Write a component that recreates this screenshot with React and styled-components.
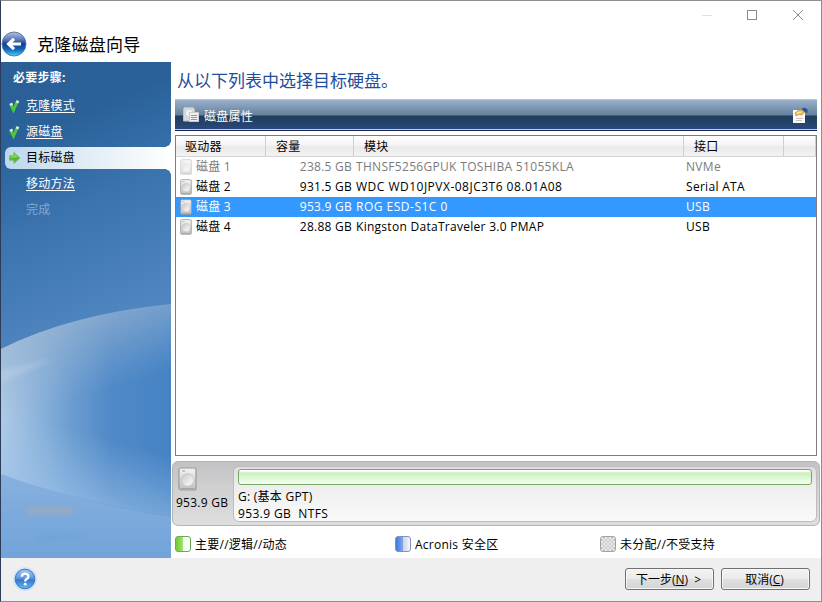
import styled, { createGlobalStyle, css } from "styled-components";

const disks = [
    { name: "磁盘 1", size: "238.5 GB", model: "THNSF5256GPUK TOSHIBA 51055KLA", bus: "NVMe", state: "off", tracking: 0.31 },
    { name: "磁盘 2", size: "931.5 GB", model: "WDC WD10JPVX-08JC3T6 08.01A08", bus: "Serial ATA", tracking: 0.49 },
    { name: "磁盘 3", size: "953.9 GB", model: "ROG ESD-S1C 0", bus: "USB", state: "on", tracking: 0.5 },
    { name: "磁盘 4", size: "28.88 GB", model: "Kingston DataTraveler 3.0 PMAP", bus: "USB", tracking: 0.28 },
];

export default function App(){
    return(
        <>
        <Global />
        <Window>
            <TitleBar>
                <BackIcon />
                <Title>克隆磁盘向导</Title>
                <WindowButtons />
            </TitleBar>
            <Body>
                <Sidebar>
                    <SidebarArt />
                    <StepsTitle>必要步骤:</StepsTitle>
                    <Step><CheckIcon /><StepLink>克隆模式</StepLink></Step>
                    <Step><CheckIcon /><StepLink>源磁盘</StepLink></Step>
                    <Step $active><ArrowIcon /><span>目标磁盘</span></Step>
                    <Step><StepLink>移动方法</StepLink></Step>
                    <Step $muted>完成</Step>
                </Sidebar>
                <Main>
                    <Heading>从以下列表中选择目标硬盘。</Heading>
                    <Toolbar>
                        <PropsIcon />
                        <ToolbarText>磁盘属性</ToolbarText>
                        <NoteIcon />
                    </Toolbar>
                    <Table>
                        <HeadRow>
                            <HeadCell>驱动器</HeadCell>
                            <HeadCell>容量</HeadCell>
                            <HeadCell>模块</HeadCell>
                            <HeadCell>接口</HeadCell>
                            <HeadCell />
                        </HeadRow>
                        {disks.map((d) => (
                            <Row key={d.name} $state={d.state}>
                                <NameCell><DriveIcon w={12} h={16} faded={d.state === "off"} />{d.name}</NameCell>
                                <SizeCell>{d.size}</SizeCell>
                                <Cell $tracking={d.tracking}>{d.model}</Cell>
                                <Cell>{d.bus}</Cell>
                            </Row>
                        ))}
                    </Table>
                    <DiskPanel>
                        <DiskInfo>
                            <DriveIcon w={19} h={24} />
                            <span>953.9 GB</span>
                        </DiskInfo>
                        <Volume>
                            <VolumeBar />
                            <VolumeText>G: (基本 GPT)</VolumeText>
                            <VolumeText $tracking={0.38}>953.9 GB&nbsp; NTFS</VolumeText>
                        </Volume>
                    </DiskPanel>
                    <Legend>
                        <LegendItem $width={220}><Swatch $kind="green" /><span>主要//逻辑//动态</span></LegendItem>
                        <LegendItem $width={205}><Swatch $kind="blue" /><span>Acronis 安全区</span></LegendItem>
                        <LegendItem><Swatch $kind="gray" /><span>未分配//不受支持</span></LegendItem>
                    </Legend>
                </Main>
            </Body>
            <Footer>
                <HelpIcon />
                <Buttons>
                    <Button>下一步(<u>N</u>)&nbsp; &gt;</Button>
                    <Button>取消(<u>C</u>)</Button>
                </Buttons>
            </Footer>
        </Window>
        </>
    );
}

function BackIcon(){
    return(
        <svg width="26" height="26" viewBox="0 0 26 26">
            <defs>
                <linearGradient id="back" x1="0" y1="0" x2="0" y2="1">
                    <stop offset="0" stopColor="#b4c0dc" />
                    <stop offset=".3" stopColor="#5f7fbb" />
                    <stop offset=".5" stopColor="#123f94" />
                    <stop offset=".72" stopColor="#1264bd" />
                    <stop offset="1" stopColor="#42d4f8" />
                </linearGradient>
            </defs>
            <circle cx="13" cy="13" r="12" fill="url(#back)" stroke="#6079a8" strokeWidth="1" />
            <path d="M7.5 13H20M13 7.8L7.6 13L13 18.2" fill="none" stroke="#fff" strokeWidth="3.2" />
        </svg>
    );
}

function WindowButtons(){
    return(
        <svg width="104" height="14" viewBox="0 0 104 14" fill="none" stroke="#8c8c8c">
            <path d="M1 7.5H11" stroke="#e2e2e2" />
            <rect x="46.5" y="2.5" width="9" height="9" />
            <path d="M92 2L102 12M102 2L92 12" />
        </svg>
    );
}

function SidebarArt(){
    return(
        <Art viewBox="0 0 170 496" preserveAspectRatio="none">
            <defs>
                <linearGradient id="sky" x1="0" y1="0" x2=".15" y2="1">
                    <stop offset="0" stopColor="#2a6096" />
                    <stop offset=".17" stopColor="#2a6199" />
                    <stop offset=".35" stopColor="#3a73ae" />
                    <stop offset=".6" stopColor="#5086bf" />
                    <stop offset="1" stopColor="#5b92cd" />
                </linearGradient>
                <linearGradient id="globe" x1="0" y1="0" x2="1" y2="0">
                    <stop offset="0" stopColor="#b0cbe6" />
                    <stop offset=".2" stopColor="#8fb5dc" />
                    <stop offset=".42" stopColor="#6a9cd0" />
                    <stop offset=".65" stopColor="#5089c7" />
                    <stop offset="1" stopColor="#4583c4" />
                </linearGradient>
                <linearGradient id="haze" gradientUnits="userSpaceOnUse" x1="60" y1="255" x2="85" y2="335">
                    <stop offset="0" stopColor="#9bb5d0" stopOpacity=".75" />
                    <stop offset="1" stopColor="#8fb0d4" stopOpacity="0" />
                </linearGradient>
                <linearGradient id="edge" gradientUnits="userSpaceOnUse" x1="85" y1="440" x2="103" y2="375">
                    <stop offset="0" stopColor="#9cc2e9" stopOpacity=".6" />
                    <stop offset="1" stopColor="#9cc2e9" stopOpacity="0" />
                </linearGradient>
                <linearGradient id="ground" x1="0" y1="0" x2="0" y2="1">
                    <stop offset="0" stopColor="#87b0de" />
                    <stop offset="1" stopColor="#71a3da" />
                </linearGradient>
                <filter id="soft" filterUnits="userSpaceOnUse" x="-20" y="280" width="210" height="220">
                    <feGaussianBlur stdDeviation="2" />
                </filter>
            </defs>
            <rect width="170" height="496" fill="url(#sky)" />
            <path d="M0 287Q70 252 170 242V496H0Z" fill="url(#globe)" />
            <path d="M0 287Q70 252 170 242V400H0Z" fill="url(#haze)" />
            <path d="M-6 310Q24 302 52 297L-6 324Z" fill="#d5e2f0" opacity=".25" filter="url(#soft)" />
            <path d="M0 330H170V455Q70 438 0 412Z" fill="url(#edge)" />
            <path d="M0 412Q70 438 170 455V496H0Z" fill="url(#ground)" />
            <path d="M26 449H71" stroke="#a9aaae" strokeWidth="7" opacity=".6" filter="url(#soft)" />
            <path d="M38 477Q58 473 84 474" fill="none" stroke="#6296cc" strokeWidth="2" opacity=".4" filter="url(#soft)" />
        </Art>
    );
}

function CheckIcon(){
    return(
        <StepIcon width="14" height="16" viewBox="0 0 14 16">
            <path d="M2.5 6L5.5 12L9.5 3" fill="none" stroke="#4bc83c" strokeWidth="3" />
            <path d="M1.2 6L4.2 4.6L5 6.8L3.2 8ZM8.5 2.3L11.3 3L10.2 5.4L7.8 4.6Z" fill="#d9f3dc" />
        </StepIcon>
    );
}

function ArrowIcon(){
    return(
        <StepIcon width="14" height="16" viewBox="0 0 14 16">
            <path d="M1.5 5.8H5.8V2.4L12 8L5.8 13.4V10.2H1.5Z" fill="#52b82f" stroke="#7cbf77" strokeWidth="1" />
            <path d="M2.5 7H7.5L6.9 4.8L9.8 7.4" fill="none" stroke="#9ddd6e" />
        </StepIcon>
    );
}

function PropsIcon(){
    return(
        <svg width="18" height="18" viewBox="0 0 18 18">
            <path d="M2.5 1.5H11L12.5 3V15H1.5V3Z" fill="#d4dadd" stroke="#b9c2c9" />
            <circle cx="7" cy="7" r="4" fill="#edf0f1" stroke="#cbd1d5" />
            <rect x="7.5" y="6.5" width="9" height="9" fill="#efefed" stroke="#c7cbd0" />
            <path d="M9 9.5H15M9 11.5H15M9 13.5H15" stroke="#8d97a6" />
        </svg>
    );
}

function NoteIcon(){
    return(
        <svg width="18" height="18" viewBox="0 0 18 18">
            <rect x="2" y="4" width="12" height="13" fill="#fafafa" />
            <path d="M5 12.5H12M5 14.5H11" stroke="#c5c5c8" />
            <path d="M4 7L7 4.5L12 4L14 6L11 9L8 8.5L5 10Z" fill="#edbd55" stroke="#c69543" strokeWidth=".7" />
            <path d="M6 7L10 6" stroke="#fae4a2" strokeWidth="1.4" />
            <path d="M10.5 3Q14 .5 16.5 3.5V7L13.5 6Z" fill="#2554a0" />
        </svg>
    );
}

function DriveIcon({ w, h, faded }){
    return(
        <svg width={w} height={h} viewBox="0 0 19 24" preserveAspectRatio="none" opacity={faded ? 0.5 : 1}>
            <defs>
                <linearGradient id="metal" x1="0" y1="0" x2="0" y2="1">
                    <stop offset="0" stopColor="#f5f5f5" />
                    <stop offset="1" stopColor="#c0c0c0" />
                </linearGradient>
                <linearGradient id="platter" x1="0" y1="0" x2="1" y2="1">
                    <stop offset="0" stopColor="#c7c7c7" />
                    <stop offset="1" stopColor="#fff" />
                </linearGradient>
            </defs>
            <rect x="1" y="1" width="17" height="22" rx="2" fill="url(#metal)" stroke="#999" strokeWidth="1.2" />
            <path d="M4 4H7" stroke="#888" strokeWidth=".8" />
            <circle cx="9.5" cy="13" r="6.2" fill="url(#platter)" stroke="#bdbdbd" strokeWidth=".7" />
            <path d="M3 21.5H16" stroke="#a4a4a4" />
        </svg>
    );
}

function HelpIcon(){
    return(
        <svg width="26" height="26" viewBox="0 0 26 26">
            <defs>
                <linearGradient id="help" x1="0" y1="0" x2="0" y2="1">
                    <stop offset="0" stopColor="#a6c9f3" />
                    <stop offset=".45" stopColor="#5e99dd" />
                    <stop offset=".55" stopColor="#3579cc" />
                    <stop offset="1" stopColor="#67b8f7" />
                </linearGradient>
            </defs>
            <circle cx="13" cy="13" r="12" fill="#d0e3f8" />
            <circle cx="13" cy="13" r="9.8" fill="url(#help)" stroke="#3e73bd" />
            <path d="M9.8 10.7Q9.8 7.6 13.1 7.6Q16.4 7.6 16.4 10.4Q16.4 12 14.5 13Q13.2 13.8 13.2 15.4" fill="none" stroke="#fff" strokeWidth="2.3" />
            <circle cx="13.2" cy="18.2" r="1.4" fill="#fff" />
        </svg>
    );
}

const Global = createGlobalStyle`
    * {
        box-sizing: border-box;
    }
    body {
        margin: 0;
        font-family: "Open Sans", "Noto Sans CJK SC", sans-serif;
        font-size: 12px;
        line-height: 20px;
        letter-spacing: 0.25px;
        color: #000;
        white-space: nowrap;
        overflow: hidden;
    }
    svg {
        display: block;
        flex: none;
    }
`

const Window = styled.div`
    display: flex;
    flex-direction: column;
    width: 822px;
    height: 602px;
    border: 1px solid #8e8e8e;
    border-left-color: #2c3b57;
    background: #fff;
`

const TitleBar = styled.div`
    display: flex;
    height: 61px;

    > svg:first-child {
        margin-top: 30px;
    }
    > svg:last-child {
        margin: 7px 16px 0 auto;
    }
`

const Title = styled.h1`
    margin: 31px 0 0 10px;
    font-size: 17px;
    font-weight: 400;
    line-height: 25px;
`

const Body = styled.div`
    display: flex;
    height: 496px;
`

const Sidebar = styled.div`
    position: relative;
    flex: none;
    width: 170px;
    padding-top: 6px;
    color: #fff;
`

/* sits behind the list of steps */
const Art = styled.svg`
    position: absolute;
    inset: 0;
    width: 100%;
    height: 100%;
`

const StepsTitle = styled.div`
    position: relative;
    height: 25px;
    padding-left: 12px;
    font-weight: 700;
    line-height: 20px;
`

const Step = styled.div`
    position: relative;
    display: flex;
    height: 26px;
    padding-left: 25px;
    line-height: 26px;

    ${(p) => p.$muted && css`
        color: #86a8cd;
    `}

    ${(p) => p.$active && css`
        height: 22px;
        margin: 2px 0 2px 4px;
        padding-left: 21px;
        line-height: 22px;
        color: #000;
        border-radius: 6px 0 0 6px;
        background: linear-gradient(90deg, #bcd7ec, #dfebf5 45%, #fff);

        &::before,
        &::after {
            content: "";
            position: absolute;
            right: 0;
            width: 6px;
            height: 6px;
        }
        &::before {
            top: -6px;
            background: radial-gradient(circle at 0 0, transparent 5.5px, #fff 6px);
        }
        &::after {
            bottom: -6px;
            background: radial-gradient(circle at 0 100%, transparent 5.5px, #fff 6px);
        }
    `}
`

/* the mark hangs in the left padding of a step */
const StepIcon = styled.svg`
    align-self: center;
    margin-left: -18px;
    margin-right: 4px;
`

const StepLink = styled.span`
    text-decoration: underline;
    text-underline-offset: 2px;
`

const Main = styled.div`
    flex: 1;
    padding: 5px 3px 0 4px;
`

const Heading = styled.h2`
    height: 32px;
    margin: 0 0 0 2px;
    font-size: 17px;
    font-weight: 400;
    line-height: 28px;
    letter-spacing: 0;
    color: #1f4e9c;
`

const Toolbar = styled.div`
    display: flex;
    align-items: center;
    width: 642px;
    height: 32px;
    padding: 0 8px 0 7px;
    color: #fff;
    border-top: 1px solid #b6c6da;
    border-bottom: 1px solid #14235a;
    box-shadow: inset 0 -1px #c4cfe2;
    background: linear-gradient(#9ab0ca, #64809c 15px, #203d59 16px, #2b4880);

    > svg:last-child {
        margin-left: auto;
    }
`

const ToolbarText = styled.span`
    margin: 4px 0 0 4px;
`

const Table = styled.div`
    width: 642px;
    height: 321px;
    margin-top: 4px;
    border: 1px solid #7d7d7d;
`

const Row = styled.div`
    display: grid;
    grid-template-columns: 90px 88px 330px 100px 1fr;
    height: 20px;
    line-height: 20px;
    color: ${(p) => (p.$state === "off" ? "#7b7b7b" : p.$state === "on" ? "#fff" : "#000")};
    background: ${(p) => (p.$state === "on" ? "#3399ff" : "none")};
`

const HeadRow = styled(Row)`
    height: 21px;
    line-height: 22px;
    background: linear-gradient(#fff, #f4f4f4 45%, #e9e9e9 55%, #f3f3f3);
    border-bottom: 1px solid #d5d5d5;
`

const HeadCell = styled.div`
    height: 20px;
    padding-left: 9px;
    border-right: 1px solid #cfcfcf;

    & + & {
        padding-left: 10px;
    }
`

const Cell = styled.div`
    padding-left: 2px;
    letter-spacing: ${(p) => p.$tracking || 0.3}px;
`

const NameCell = styled.div`
    display: flex;
    align-items: center;
    gap: 4px;
    padding-left: 4px;
`

const SizeCell = styled.div`
    padding-right: 2px;
    text-align: right;
`

const DiskPanel = styled.div`
    display: flex;
    width: 648px;
    height: 65px;
    margin: 5px 0 0 -3px;
    padding: 4px 2px 4px 3px;
    border: 1px solid #b4b4b4;
    border-radius: 6px;
    background: linear-gradient(#c3c1c4, #d0d0d0 40%, #dedede);
`

const DiskInfo = styled.div`
    flex: none;
    width: 57px;

    > svg {
        margin: 1px 0 2px 2px;
    }
`

const Volume = styled.div`
    flex: 1;
    height: 56px;
    padding: 3px 4px;
    border: 1px solid #bdbdbd;
    border-radius: 6px;
    background: linear-gradient(#dedede, #eee 35%, #f2f2f2 60%, #fafafa);
`

const VolumeBar = styled.div`
    height: 16px;
    margin: -1px 0 3px;
    border: 1px solid #78a765;
    border-radius: 3px;
    background: linear-gradient(#fff 1px, #caefbb 3px, #f8fff5);
`

const VolumeText = styled.div`
    line-height: 17px;
    letter-spacing: ${(p) => p.$tracking || 0.25}px;
`

const Legend = styled.div`
    display: flex;
    margin-top: 8px;
`

const LegendItem = styled.div`
    display: flex;
    align-items: center;
    gap: 4px;
    width: ${(p) => (p.$width ? p.$width + "px" : "auto")};

    > span:last-child {
        line-height: 22px;
        height: 20px;
    }
`

const swatches = {
    green: "linear-gradient(90deg, #72c933, #a1e273 50%, #edfbe8 50%, #fff)",
    blue: "linear-gradient(90deg, #3f78db, #81a9ee 50%, #c9d3e5 50%, #f5f7fb)",
    gray: "repeating-conic-gradient(#c9c9c9 0 25%, #ededed 0 50%) 0 0 / 4px 4px",
}

const Swatch = styled.span`
    width: 16px;
    height: 16px;
    border: 1px solid ${(p) => (p.$kind === "green" ? "#6da750" : p.$kind === "blue" ? "#8393b5" : "#a2a2a2")};
    border-radius: 3px;
    background: ${(p) => swatches[p.$kind]};
`

const Footer = styled.div`
    display: flex;
    align-items: flex-start;
    flex: 1;
    padding: 8px 11px 0 11px;
    background: #efefef;
`

const Buttons = styled.div`
    display: flex;
    gap: 7px;
    margin: 2px 0 0 auto;
`

const Button = styled.button`
    width: 89px;
    height: 22px;
    padding: 2px 2px 0 0;
    font: inherit;
    line-height: 18px;
    color: #000;
    border: 1px solid #707070;
    border-radius: 3px;
    background: linear-gradient(#f3f3f3, #ebebeb 48%, #dfdfdf 52%, #d4d4d4);
    box-shadow: inset 0 0 0 1px #f8f8f8;
`
